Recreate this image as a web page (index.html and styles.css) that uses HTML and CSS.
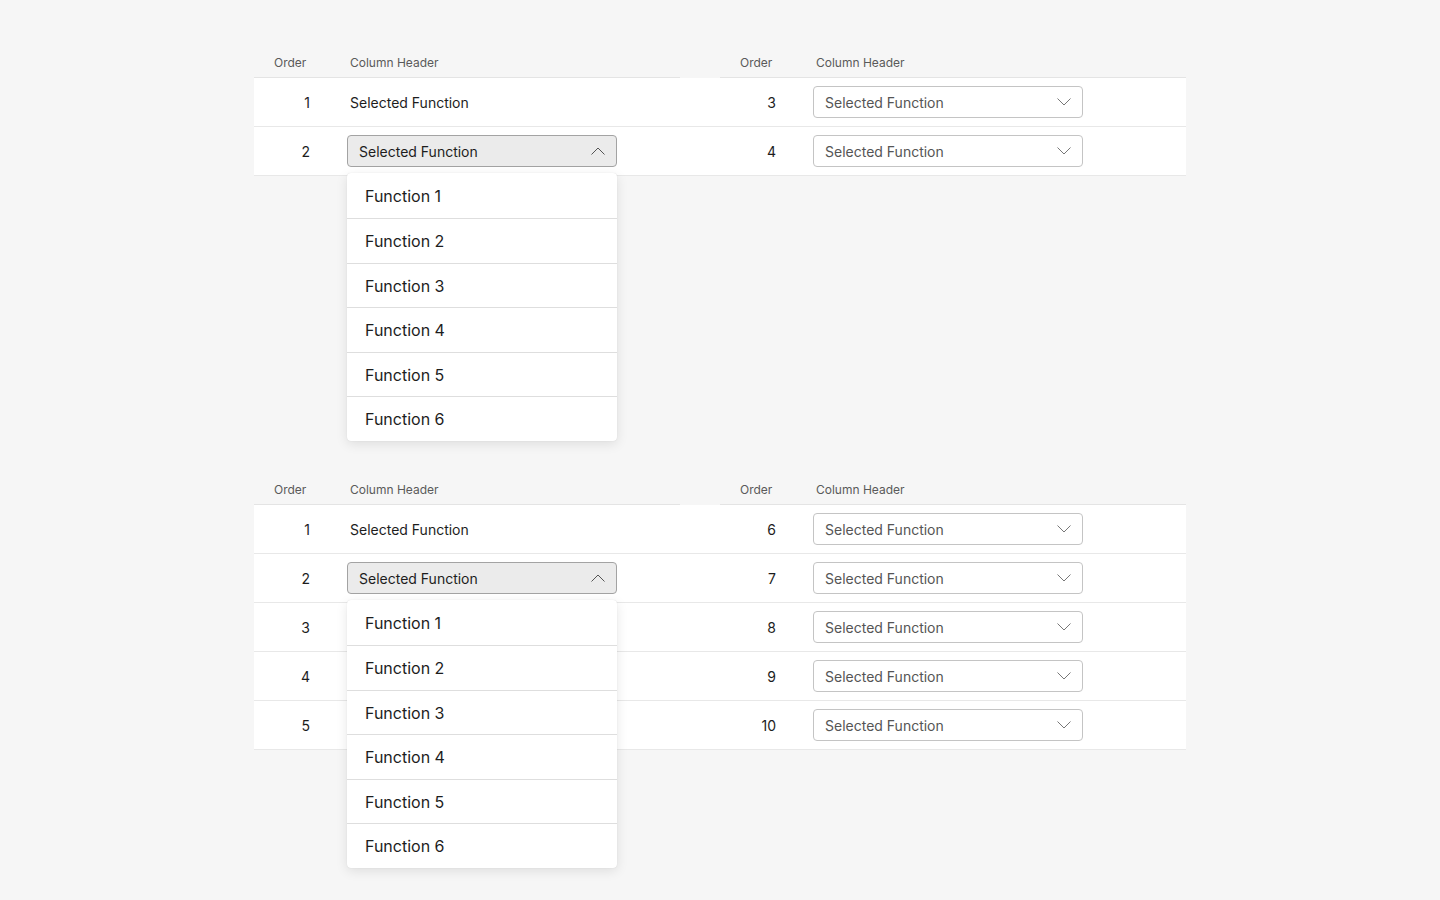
FILE: index.html
```html
<!DOCTYPE html>
<html lang="en">
<head>
    <meta charset="UTF-8">
    <meta name="viewport" content="width=device-width, initial-scale=1.0">
    <title>Column Function Mapping</title>
    <link rel="stylesheet" href="styles.css">
</head>
<body>
    <div class="page">

        <!-- Sheet 1 -->
        <div class="sheet">
            <div class="head">
                <div class="half left">
                    <div class="order">Order</div>
                    <div class="cell">Column Header</div>
                </div>
                <div class="half right">
                    <div class="order">Order</div>
                    <div class="cell">Column Header</div>
                </div>
            </div>

            <div class="row">
                <div class="half left">
                    <div class="order num">1</div>
                    <div class="cell"><span class="plain">Selected Function</span></div>
                </div>
                <div class="half right">
                    <div class="order num">3</div>
                    <div class="cell">
                        <div class="select">
                            <span>Selected Function</span>
                            <svg class="chev" width="14" height="8" viewBox="0 0 14 8"><polyline points="0.5,0.5 7,7 13.5,0.5" /></svg>
                        </div>
                    </div>
                </div>
            </div>

            <div class="row">
                <div class="half left">
                    <div class="order num">2</div>
                    <div class="cell">
                        <div class="select open">
                            <span>Selected Function</span>
                            <svg class="chev" width="14" height="8" viewBox="0 0 14 8"><polyline points="0.5,7.5 7,1 13.5,7.5" /></svg>
                            <ul class="menu">
                                <li>Function 1</li>
                                <li>Function 2</li>
                                <li>Function 3</li>
                                <li>Function 4</li>
                                <li>Function 5</li>
                                <li>Function 6</li>
                            </ul>
                        </div>
                    </div>
                </div>
                <div class="half right">
                    <div class="order num">4</div>
                    <div class="cell">
                        <div class="select">
                            <span>Selected Function</span>
                            <svg class="chev" width="14" height="8" viewBox="0 0 14 8"><polyline points="0.5,0.5 7,7 13.5,0.5" /></svg>
                        </div>
                    </div>
                </div>
            </div>
        </div>

        <!-- Sheet 2 -->
        <div class="sheet">
            <div class="head">
                <div class="half left">
                    <div class="order">Order</div>
                    <div class="cell">Column Header</div>
                </div>
                <div class="half right">
                    <div class="order">Order</div>
                    <div class="cell">Column Header</div>
                </div>
            </div>

            <div class="row">
                <div class="half left">
                    <div class="order num">1</div>
                    <div class="cell"><span class="plain">Selected Function</span></div>
                </div>
                <div class="half right">
                    <div class="order num">6</div>
                    <div class="cell">
                        <div class="select">
                            <span>Selected Function</span>
                            <svg class="chev" width="14" height="8" viewBox="0 0 14 8"><polyline points="0.5,0.5 7,7 13.5,0.5" /></svg>
                        </div>
                    </div>
                </div>
            </div>

            <div class="row">
                <div class="half left">
                    <div class="order num">2</div>
                    <div class="cell">
                        <div class="select open">
                            <span>Selected Function</span>
                            <svg class="chev" width="14" height="8" viewBox="0 0 14 8"><polyline points="0.5,7.5 7,1 13.5,7.5" /></svg>
                            <ul class="menu">
                                <li>Function 1</li>
                                <li>Function 2</li>
                                <li>Function 3</li>
                                <li>Function 4</li>
                                <li>Function 5</li>
                                <li>Function 6</li>
                            </ul>
                        </div>
                    </div>
                </div>
                <div class="half right">
                    <div class="order num">7</div>
                    <div class="cell">
                        <div class="select">
                            <span>Selected Function</span>
                            <svg class="chev" width="14" height="8" viewBox="0 0 14 8"><polyline points="0.5,0.5 7,7 13.5,0.5" /></svg>
                        </div>
                    </div>
                </div>
            </div>

            <div class="row">
                <div class="half left">
                    <div class="order num">3</div>
                    <div class="cell"></div>
                </div>
                <div class="half right">
                    <div class="order num">8</div>
                    <div class="cell">
                        <div class="select">
                            <span>Selected Function</span>
                            <svg class="chev" width="14" height="8" viewBox="0 0 14 8"><polyline points="0.5,0.5 7,7 13.5,0.5" /></svg>
                        </div>
                    </div>
                </div>
            </div>

            <div class="row">
                <div class="half left">
                    <div class="order num">4</div>
                    <div class="cell"></div>
                </div>
                <div class="half right">
                    <div class="order num">9</div>
                    <div class="cell">
                        <div class="select">
                            <span>Selected Function</span>
                            <svg class="chev" width="14" height="8" viewBox="0 0 14 8"><polyline points="0.5,0.5 7,7 13.5,0.5" /></svg>
                        </div>
                    </div>
                </div>
            </div>

            <div class="row">
                <div class="half left">
                    <div class="order num">5</div>
                    <div class="cell"></div>
                </div>
                <div class="half right">
                    <div class="order num">10</div>
                    <div class="cell">
                        <div class="select">
                            <span>Selected Function</span>
                            <svg class="chev" width="14" height="8" viewBox="0 0 14 8"><polyline points="0.5,0.5 7,7 13.5,0.5" /></svg>
                        </div>
                    </div>
                </div>
            </div>
        </div>

    </div>
</body>
</html>
```

FILE: styles.css
```css
/* General Styles */
html,
body {
    min-height: 100%;
}

body {
    margin: 0;
    background: #f6f6f6;
    font-family: 'Inter', 'Noto Sans', sans-serif;
    color: #1d1d1d;
}

.page {
    width: 932px;
    min-height: 100vh;
    box-sizing: border-box;
    margin: 0 auto;
    padding: 45px 0 160px;
    display: flex;
    flex-direction: column;
    gap: 296px;
}

/* Table rows */
.head,
.row {
    display: flex;
}

.head {
    font-size: 12px;
    color: #5a5a5a;
}

.head .half {
    height: 33px;
    box-sizing: border-box;
    padding-top: 2px;
    border-bottom: 1px solid #e4e4e4;
}

.row {
    height: 48px;
    background: #fff;
    border-bottom: 1px solid #e8e8e8;
    font-size: 14px;
}

.half {
    display: flex;
    align-items: center;
}

.half.left {
    width: 426px;
}

.half.right {
    flex: 1;
    margin-left: 40px;
}

.order {
    width: 76px;
    box-sizing: border-box;
    padding-left: 20px;
    flex-shrink: 0;
}

.order.num {
    padding-left: 0;
    padding-right: 20px;
    text-align: right;
}

.cell {
    padding-left: 17px;
    flex: 1;
}

.head .cell {
    padding-left: 20px;
}

.plain {
    padding-left: 3px;
}

/* Dropdown */
.select {
    position: relative;
    width: 270px;
    height: 32px;
    box-sizing: border-box;
    border: 1px solid #c4c4c4;
    border-radius: 4px;
    background: #fff;
    padding: 0 11px 0 11px;
    display: flex;
    align-items: center;
    justify-content: space-between;
    color: #555;
}

.select.open {
    background: #ebebeb;
    border-color: #a3a3a3;
    color: #1d1d1d;
}

.chev {
    fill: none;
    stroke: #777;
    stroke-width: 1;
}

.select.open .chev {
    stroke: #555;
}

.menu {
    position: absolute;
    top: calc(100% + 7px);
    left: -1px;
    width: 270px;
    margin: 0;
    padding: 0;
    list-style: none;
    background: #fff;
    border-radius: 4px;
    box-shadow: 0 3px 12px rgba(0, 0, 0, 0.1), 0 0 1px rgba(0, 0, 0, 0.15);
    z-index: 2;
}

.menu li {
    height: 44.5px;
    box-sizing: border-box;
    padding: 1px 0 0 18px;
    display: flex;
    align-items: center;
    font-size: 16px;
    color: #1d1d1d;
    border-top: 1px solid #dedede;
}

.menu li:first-child {
    border-top: none;
    height: 45px;
}
```
